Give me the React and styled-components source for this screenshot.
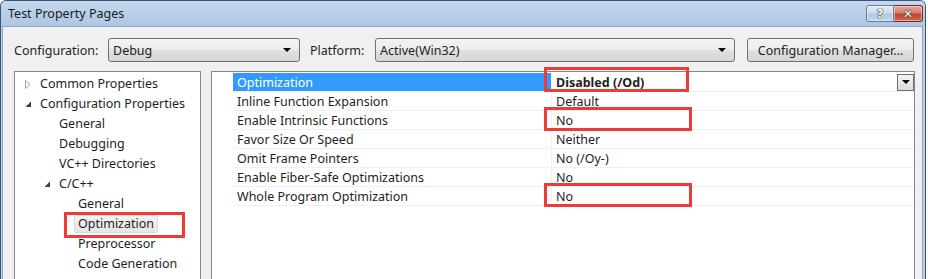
import React from 'react';
import styled, {createGlobalStyle} from 'styled-components';

const Global = createGlobalStyle`
  html, body {
    margin: 0;
    padding: 0;
    background: #ffffff;
    overflow: hidden;
  }
  body {
    font-family: "Noto Sans", "Open Sans", sans-serif;
    font-size: 12.5px;
    color: #1e1e1e;
  }
`;

const Window = styled.div`
  width: 924px;
  height: 279px;
  display: flex;
  flex-direction: column;
  border: 1px solid #3d5575;
  border-bottom: none;
  border-radius: 6px 6px 0 0;
  background: linear-gradient(90deg, #bcd0ea, #c8d9ef 50%, #bcd0ea);
  overflow: hidden;
`;

const TitleBar = styled.div`
  height: 25px;
  flex: none;
  display: flex;
  align-items: flex-start;
  background: linear-gradient(#c6d8ee, #adc6e5);
`;

const Title = styled.div`
  flex: 1;
  padding: 4px 0 0 7px;
  font-size: 12.5px;
  color: #1b1b1b;
`;

const Caption = styled.div`
  display: flex;
  margin: 4px 2px 0 0;
`;

const CapButton = styled.div`
  width: ${p => p.$w}px;
  height: 15px;
  display: flex;
  align-items: center;
  justify-content: center;
  border: 1px solid ${p => (p.$close ? '#6e2c25' : '#687c9a')};
  border-radius: ${p => (p.$close ? '0 3px 3px 0' : '3px 0 0 3px')};
  border-left-width: ${p => (p.$close ? '0' : '1px')};
  background: ${p =>
    p.$close
      ? 'linear-gradient(#e8a898, #d3806e 45%, #c0442f 55%, #d06a52)'
      : 'linear-gradient(#e4edf7, #cddcee 45%, #b3c8e3 55%, #c3d6ec)'};
  color: #ffffff;
  font-family: "DejaVu Sans", sans-serif;
  font-weight: bold;
  font-size: 12px;
  text-shadow: 0 0 1px #2a2a2a, 0 0 1px #2a2a2a, 0 0 1px #2a2a2a;
  box-shadow: inset 0 0 0 1px rgba(255, 255, 255, 0.45);
`;

const Body = styled.div`
  flex: 1;
  margin: 0 2px 0 1px;
  background: #f0f0f0;
  border: 1px solid #8fa4bf;
  border-bottom: none;
  display: flex;
  flex-direction: column;
  padding: 11px 0 0 11px;
`;

const Toolbar = styled.div`
  display: flex;
  align-items: center;
  height: 24px;
`;

const Label = styled.div`
  width: ${p => p.$w}px;
  flex: none;
`;

const Combo = styled.div`
  width: ${p => p.$w}px;
  height: 22px;
  flex: none;
  display: flex;
  align-items: center;
  justify-content: space-between;
  padding: 0 8px 0 4px;
  box-sizing: content-box;
  border: 1px solid #707070;
  border-radius: 3px;
  background: linear-gradient(#f3f3f3, #ececec 50%, #e0e0e0 50%, #d6d6d6);
  margin-right: ${p => p.$mr || 0}px;
`;

const Arrow = styled.span`
  width: 0;
  height: 0;
  border-left: 4px solid transparent;
  border-right: 4px solid transparent;
  border-top: 4px solid #000000;
`;

const Button = styled.div`
  width: 165px;
  height: 22px;
  display: flex;
  align-items: center;
  justify-content: center;
  border: 1px solid #707070;
  border-radius: 3px;
  background: linear-gradient(#f3f3f3, #ececec 50%, #e0e0e0 50%, #d6d6d6);
`;

const Main = styled.div`
  flex: 1;
  display: flex;
  margin-top: 9px;
  gap: 10px;
`;

const Tree = styled.div`
  width: 185px;
  flex: none;
  border: 1px solid #828790;
  border-bottom: none;
  background: #ffffff;
  padding-top: 2px;
`;

const TreeItem = styled.div`
  position: relative;
  height: 20px;
  display: flex;
  align-items: center;
  padding-left: ${p => 10 + p.$level * 19}px;
`;

const Expander = styled.span`
  width: 14px;
  height: 20px;
  flex: none;
  display: flex;
  align-items: center;
  justify-content: flex-start;
`;

const ItemText = styled.span`
  padding: 0 3px;
  margin-left: -3px;
  line-height: 16px;
  border: 1px solid ${p => (p.$selected ? '#d9d9d9' : 'transparent')};
  border-radius: 2px;
  background: ${p => (p.$selected ? 'linear-gradient(#f2f2f2, #e6e6e6)' : 'transparent')};
`;

const Annot = styled.div`
  position: absolute;
  left: ${p => p.$x}px;
  top: ${p => p.$y}px;
  width: ${p => p.$w}px;
  height: ${p => p.$h}px;
  border: 3px solid #ef3a3a;
  box-sizing: border-box;
  pointer-events: none;
`;

const Grid = styled.div`
  width: 702px;
  flex: none;
  border: 1px solid #828790;
  border-bottom: none;
  background: #ffffff;
  padding-top: 1px;
`;

const Row = styled.div`
  display: flex;
  height: 18px;
  margin-left: 21px;
  border-bottom: 1px solid #f0f0f0;
`;

const NameCell = styled.div`
  width: 314px;
  flex: none;
  padding-left: 4px;
  display: flex;
  align-items: center;
  border-right: 1px solid #f0f0f0;
  background: ${p => (p.$selected ? '#3399ff' : 'transparent')};
  color: ${p => (p.$selected ? '#ffffff' : '#1e1e1e')};
`;

const ValueCell = styled.div`
  position: relative;
  flex: 1;
  padding-left: 4px;
  display: flex;
  align-items: center;
  font-weight: ${p => (p.$selected ? 'bold' : 'normal')};
`;

const ValueText = styled.span`
  flex: 1;
`;

const DropButton = styled.div`
  width: 15px;
  height: 15px;
  display: flex;
  align-items: center;
  justify-content: center;
  border: 1px solid #6e6e6e;
  background: linear-gradient(#f4f4f4, #dcdcdc);
`;

const tree = [
  {label: 'Common Properties', level: 0, exp: 'closed'},
  {label: 'Configuration Properties', level: 0, exp: 'open'},
  {label: 'General', level: 1},
  {label: 'Debugging', level: 1},
  {label: 'VC++ Directories', level: 1},
  {label: 'C/C++', level: 1, exp: 'open'},
  {label: 'General', level: 2},
  {label: 'Optimization', level: 2, selected: true},
  {label: 'Preprocessor', level: 2},
  {label: 'Code Generation', level: 2},
  {label: 'Language', level: 2},
];

const props = [
  {name: 'Optimization', value: 'Disabled (/Od)', selected: true, mark: {x: -8, y: -6, w: 145, h: 25}},
  {name: 'Inline Function Expansion', value: 'Default'},
  {name: 'Enable Intrinsic Functions', value: 'No', mark: {x: -8, y: -4, w: 148, h: 24}},
  {name: 'Favor Size Or Speed', value: 'Neither'},
  {name: 'Omit Frame Pointers', value: 'No (/Oy-)'},
  {name: 'Enable Fiber-Safe Optimizations', value: 'No'},
  {name: 'Whole Program Optimization', value: 'No', mark: {x: -8, y: -4, w: 148, h: 24}},
];

const ExpandIcon = ({type}) => {
  if (type === 'closed') {
    return (
      <svg width="6" height="9" viewBox="0 0 6 9">
        <path d="M0.5 0.5 L5 4.5 L0.5 8.5 Z" fill="none" stroke="#a6a6a6" strokeWidth="1" />
      </svg>
    );
  }
  if (type === 'open') {
    return (
      <svg width="7" height="7" viewBox="0 0 7 7">
        <path d="M6 0.5 L6 6 L0.5 6 Z" fill="#3c3c3c" />
      </svg>
    );
  }
  return null;
};

const App = () => {
  return (
    <>
      <Global />
      <Window>
        <TitleBar>
          <Title>Test Property Pages</Title>
          <Caption>
            <CapButton $w={26}>?</CapButton>
            <CapButton $w={28} $close>✕</CapButton>
          </Caption>
        </TitleBar>
        <Body>
          <Toolbar>
            <Label $w={94}>Configuration:</Label>
            <Combo $w={178} $mr={10}>
              <span>Debug</span>
              <Arrow />
            </Combo>
            <Label $w={65}>Platform:</Label>
            <Combo $w={346} $mr={12}>
              <span>Active(Win32)</span>
              <Arrow />
            </Combo>
            <Button>Configuration Manager...</Button>
          </Toolbar>
          <Main>
            <Tree>
              {tree.map((item, i) => (
                <TreeItem key={i} $level={item.level}>
                  <Expander>
                    <ExpandIcon type={item.exp} />
                  </Expander>
                  <ItemText $selected={item.selected}>{item.label}</ItemText>
                  {item.selected && <Annot $x={49} $y={-2} $w={121} $h={26} />}
                </TreeItem>
              ))}
            </Tree>
            <Grid>
              {props.map((p, i) => (
                <Row key={i}>
                  <NameCell $selected={p.selected}>{p.name}</NameCell>
                  <ValueCell $selected={p.selected}>
                    <ValueText>{p.value}</ValueText>
                    {p.selected && (
                      <DropButton>
                        <Arrow />
                      </DropButton>
                    )}
                    {p.mark && <Annot $x={p.mark.x} $y={p.mark.y} $w={p.mark.w} $h={p.mark.h} />}
                  </ValueCell>
                </Row>
              ))}
            </Grid>
          </Main>
        </Body>
      </Window>
    </>
  );
};

export default App;
